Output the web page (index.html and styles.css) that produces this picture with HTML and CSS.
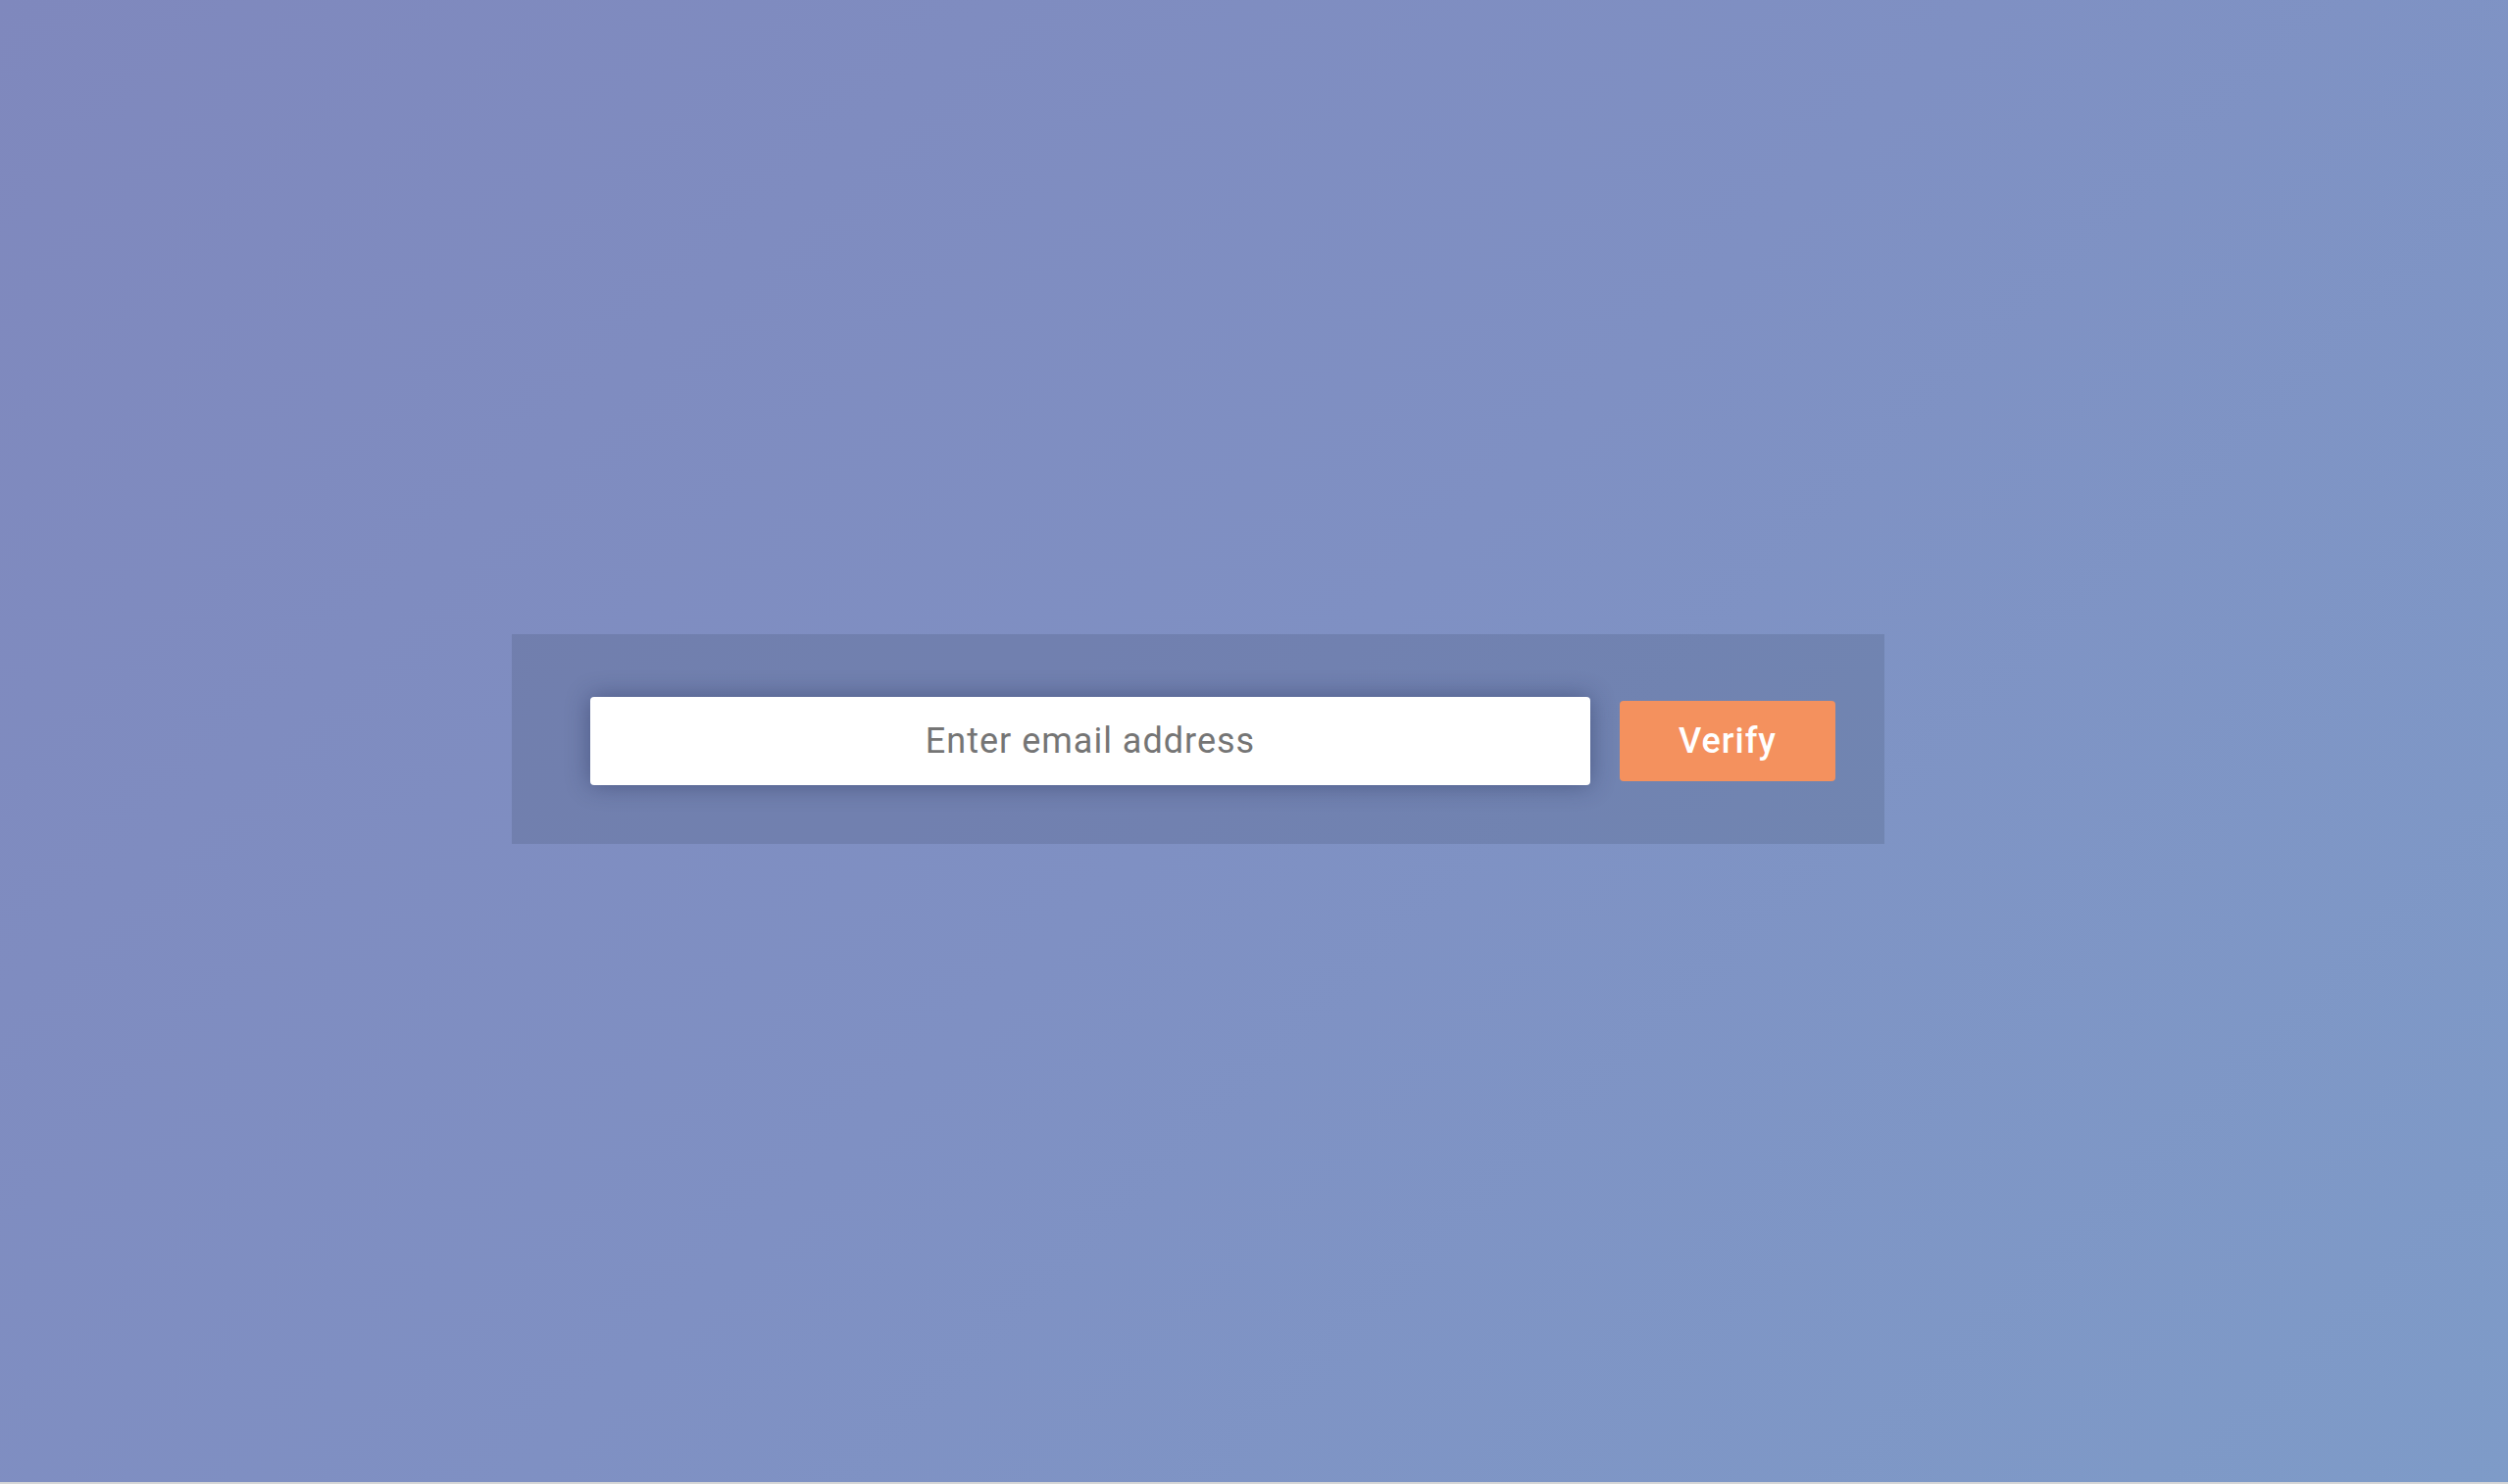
FILE: index.html
```html
<!DOCTYPE html>
<html>
<head>
<meta charset="utf-8">
<link rel="stylesheet" href="styles.css">
</head>
<body>
<div class="page">
  <form class="panel">
    <input class="email" type="text" placeholder="Enter email address">
    <button class="verify" type="button">Verify</button>
  </form>
</div>
<div class="strip"></div>
</body>
</html>
```
FILE: styles.css
```css
html, body {
  margin: 0;
  padding: 0;
  background: #d6d6d6;
}
.page {
  height: 1512px;
  background: linear-gradient(135deg, #7f88bd 0%, #7f90c3 50%, #7e9bc8 100%);
  display: flex;
  align-items: center;
  padding-left: 522px;
  box-sizing: border-box;
}
.panel {
  margin: 0;
  display: flex;
  align-items: center;
  width: 1400px;
  box-sizing: border-box;
  padding: 64px 50px 60px 80px;
  background: rgba(45, 60, 85, 0.17);
  transform: translateY(-2px);
}
.email {
  width: 1020px;
  height: 90px;
  box-sizing: border-box;
  border: none;
  border-radius: 4px;
  background: #fff;
  box-shadow: 0 0 24px rgba(30, 40, 80, 0.45);
  font-family: Roboto, "Liberation Sans", sans-serif;
  font-size: 36px;
  letter-spacing: 1px;
  text-align: center;
  color: #333;
  outline: none;
  padding: 0;
}
.email::placeholder {
  color: #757575;
  opacity: 1;
}
.verify {
  margin-left: 30px;
  width: 220px;
  height: 82px;
  border: none;
  border-radius: 4px;
  background: #f4915e;
  color: #fff;
  font-family: Roboto, "Liberation Sans", sans-serif;
  font-size: 36px;
  font-weight: 500;
  letter-spacing: 1px;
  padding: 0;
}
.strip {
  height: 2px;
  background: #d6d6d6;
}
```
